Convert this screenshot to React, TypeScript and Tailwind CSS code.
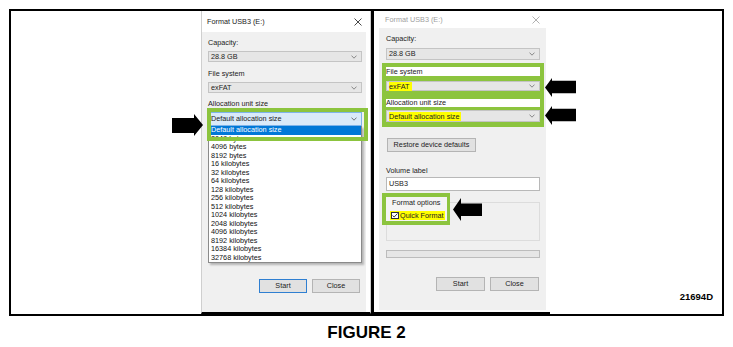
import React from "react";

const GREEN = "bg-[#8cc43e]";

function Chevron({ color = "#707070" }: { color?: string }) {
  return (
    <svg width="6" height="4" viewBox="0 0 6 4" className="shrink-0">
      <polyline points="0.5,0.6 3,3.2 5.5,0.6" fill="none" stroke={color} strokeWidth="0.8" />
    </svg>
  );
}

function CloseX({ color }: { color: string }) {
  return (
    <svg width="8" height="8" viewBox="0 0 8 8">
      <path d="M0.5 0.5 L7.5 7.5 M7.5 0.5 L0.5 7.5" stroke={color} strokeWidth="0.9" />
    </svg>
  );
}

function Combo({ children, h = "h-[11px]" }: { children: React.ReactNode; h?: string }) {
  return (
    <div className={`${h} flex items-center justify-between border border-[#c4c4c4] bg-[#e6e6e6] pl-[2px] pr-[4px]`}>
      <span className="leading-none">{children}</span>
      <Chevron />
    </div>
  );
}

function Btn({ label, w, focus = false }: { label: string; w: string; focus?: boolean }) {
  return (
    <div
      className={`${w} h-[14px] flex items-center justify-center bg-[#e1e1e1] border ${
        focus ? "border-[#2f7fd1]" : "border-[#b4b4b4]"
      } leading-none`}
    >
      {label}
    </div>
  );
}

function LeftArrow({ className }: { className: string }) {
  return (
    <svg className={className} width="31" height="22" viewBox="0 0 31 22">
      <polygon points="0,4 22,4 22,0 31,11 22,22 22,19 0,19" fill="#000" />
    </svg>
  );
}

const listItems = [
  "2048 bytes",
  "4096 bytes",
  "8192 bytes",
  "16 kilobytes",
  "32 kilobytes",
  "64 kilobytes",
  "128 kilobytes",
  "256 kilobytes",
  "512 kilobytes",
  "1024 kilobytes",
  "2048 kilobytes",
  "4096 kilobytes",
  "8192 kilobytes",
  "16384 kilobytes",
  "32768 kilobytes",
];

function LeftDialog() {
  return (
    <div className="w-[170px] h-full flex flex-col bg-white border-x border-x-[#cfcfcf] border-b-2 border-b-black">
      <div className="h-[21px] shrink-0 flex items-center justify-between pl-[5px] pr-[8px] text-[#222]">
        <span className="leading-none">Format USB3 (E:)</span>
        <CloseX color="#333" />
      </div>
      <div className="flex-1 bg-[#f0f0f0] mr-[4px] pl-[6px] pr-[4px] flex flex-col text-[#222]">
        <div className="mt-[6px] h-[9px] leading-[9px]">Capacity:</div>
        <div className="mt-[4px]">
          <Combo>28.8 GB</Combo>
        </div>
        <div className="mt-[7px] h-[9px] leading-[9px]">File system</div>
        <div className="mt-[4px]">
          <Combo>exFAT</Combo>
        </div>
        <div className="mt-[6px] h-[9px] leading-[9px]">Allocation unit size</div>
        <div className="mt-[4px] h-[14px] flex items-center justify-between border border-[#7eb4ea] bg-[#d9eaf9] pl-[2px] pr-[4px]">
          <span className="leading-none">Default allocation size</span>
          <Chevron color="#555" />
        </div>
        <div className="bg-white border-x border-b border-[#8a8a8a] shadow-[2px_2px_2px_rgba(0,0,0,0.25)]">
          <div className="h-[8.5px] leading-[8.5px] bg-[#0078d7] text-white pl-[2px]">Default allocation size</div>
          {listItems.map((t) => (
            <div key={t} className="h-[8.5px] leading-[8.5px] pl-[2px] text-[#111]">
              {t}
            </div>
          ))}
        </div>
        <div className="mt-[16px] flex justify-end gap-[5px] pr-[2px]">
          <Btn label="Start" w="w-[48px]" focus />
          <Btn label="Close" w="w-[48px]" />
        </div>
      </div>
    </div>
  );
}

function RightDialog() {
  return (
    <div className="w-[176px] h-full flex flex-col bg-white border-b-2 border-b-black">
      <div className="h-[17px] shrink-0 flex items-center justify-between pl-[11px] pr-[10px] text-[#a0a0a0]">
        <span className="leading-none">Format USB3 (E:)</span>
        <CloseX color="#a8a8a8" />
      </div>
      <div className="flex-1 bg-[#f0f0f0] ml-[5px] mr-[4px] mb-[2px] pl-[7px] pr-[6px] flex flex-col text-[#222]">
        <div className="mt-[6px] h-[9px] leading-[9px]">Capacity:</div>
        <div className="mt-[5px]">
          <Combo h="h-[12px]">28.8 GB</Combo>
        </div>
        <div className={`mt-[3px] -mx-[4px] px-[4px] pt-[4px] pb-[5px] ${GREEN} flex flex-col`}>
          <div className="h-[9px] bg-white whitespace-nowrap leading-[9px]">File system</div>
          <div className="mt-[5px] h-[10px] flex items-center justify-between border border-[#c4c4c4] bg-[#e6e6e6] pl-[2px] pr-[4px]">
            <span className="leading-[9px] bg-[#ffff00] pr-[3px]">exFAT</span>
            <Chevron />
          </div>
          <div className="mt-[8px] h-[8px] bg-white whitespace-nowrap leading-[8px]">Allocation unit size</div>
          <div className="mt-[3px] h-[12px] flex items-center justify-between border border-[#c4c4c4] bg-[#e6e6e6] pl-[2px] pr-[4px]">
            <span className="leading-[9px] bg-[#ffff00] pr-[1px]">Default allocation size</span>
            <Chevron />
          </div>
        </div>
        <div className="mt-[11px] ml-[1px]">
          <Btn label="Restore device defaults" w="w-[89px]" />
        </div>
        <div className="mt-[14px] h-[9px] leading-[9px]">Volume label</div>
        <div className="mt-[2px] h-[14px] flex items-center bg-white border border-[#b8b8b8] pl-[2px]">
          <span className="leading-none">USB3</span>
        </div>
        <div className="mt-[2px] h-[48px] relative">
          <div className="absolute left-0 right-0 top-[9px] bottom-0 border border-[#dcdcdc]" />
          <div className={`relative -ml-[4px] w-[68px] h-[32px] ${GREEN} pt-[4px] pb-[4px] pl-[4px] pr-[3px]`}>
            <div className="h-full bg-[#f4f4f4] flex flex-col pl-[6px]">
              <div className="mt-[1px] h-[9px] leading-[9px]">Format options</div>
              <div className="mt-[4px] h-[9px] flex">
                <span className="flex items-center gap-[1px] bg-[#ffff00] pl-[1px] pr-[1px] -ml-[2px]">
                  <span className="w-[8px] h-[7px] border border-[#333] bg-white flex items-center justify-center">
                    <svg width="6" height="5" viewBox="0 0 6 5">
                      <polyline points="0.5,2.5 2.2,4 5.5,0.5" fill="none" stroke="#222" strokeWidth="0.9" />
                    </svg>
                  </span>
                  <span className="leading-none">Quick Format</span>
                </span>
              </div>
            </div>
          </div>
        </div>
        <div className="mt-[9px] h-[8px] border border-[#bcbcbc] bg-[#e6e6e6]" />
        <div className="mt-[19px] flex justify-end gap-[5px] pr-[1px]">
          <Btn label="Start" w="w-[49px]" />
          <Btn label="Close" w="w-[49px]" />
        </div>
      </div>
    </div>
  );
}

export default function App() {
  return (
    <div className="relative w-[733px] h-[347px] bg-white font-['Liberation_Sans',Arial,sans-serif] text-[7.25px] overflow-hidden">
      <div className="pt-[9px] pl-[9px]">
        <div className="w-[715px] h-[307px] border-2 border-black flex">
          <div className="w-[190px] shrink-0" />
          <LeftDialog />
          <div className="w-[3px] shrink-0 bg-black" />
          <RightDialog />
          <div className="flex-1 flex items-end justify-end pr-[9px] pb-[11px]">
            <span className="text-[9.5px] font-bold leading-[12px] text-black">21694D</span>
          </div>
        </div>
      </div>
      <div className="mt-[7px] text-center text-[17px] font-bold leading-[20px] text-black">FIGURE 2</div>

      {/* annotation overlays */}
      <div className="absolute left-[207px] top-[108px] w-[161px] h-[33px] border-4 border-[#8cc43e]" />
      <LeftArrow className="absolute left-[172px] top-[114px]" />
      <svg className="absolute left-[545px] top-[78px]" width="31" height="19" viewBox="0 0 31 19">
        <polygon points="0,9.5 7,0 7,2.7 31,2.7 31,15.3 7,15.3 7,19" fill="#000" />
      </svg>
      <svg className="absolute left-[545px] top-[106px]" width="31" height="19" viewBox="0 0 31 19">
        <polygon points="0,9.5 7,0 7,2.7 31,2.7 31,15.3 7,15.3 7,19" fill="#000" />
      </svg>
      <svg className="absolute left-[453px] top-[198px]" width="29" height="23" viewBox="0 0 29 23">
        <polygon points="0,11.5 8,0 8,5.5 29,5.5 29,18 8,18 8,23" fill="#000" />
      </svg>
    </div>
  );
}
